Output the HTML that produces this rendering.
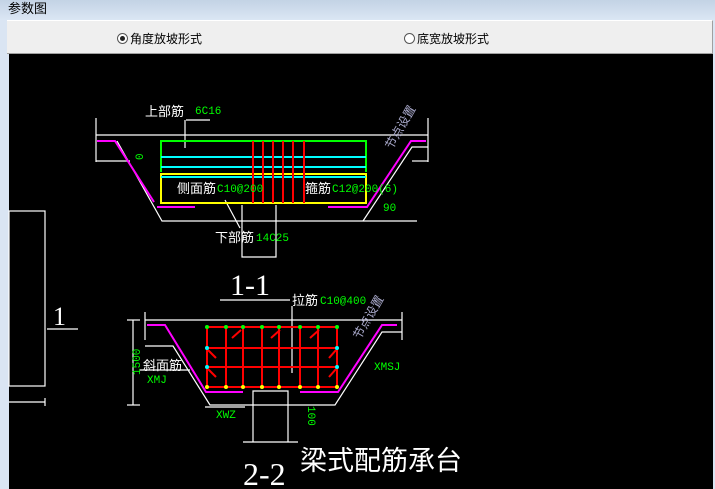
<!DOCTYPE html>
<html><head><meta charset="utf-8"><style>
*{margin:0;padding:0}
body{width:715px;height:489px;overflow:hidden;background:#dae5f3;position:relative;font-family:"Liberation Sans","Noto Sans CJK SC",sans-serif}
#title{position:absolute;left:0;top:0;width:715px;height:20px;background:linear-gradient(#c3d3e5,#dbe6f4);font-size:13px;line-height:18px;padding-left:8px;color:#000}
#panel{position:absolute;left:7px;top:20px;width:705px;height:32px;background:#efefef;border-top:1px solid #fff;border-bottom:1px solid #a0a0a0;border-right:1px solid #a0a0a0;font-size:12px}
.r{position:absolute;top:9px;display:flex;align-items:center;gap:2px}
.c{width:11px;height:11px;border:1px solid #555;border-radius:50%;background:#fff;position:relative;box-sizing:border-box}
.c.on::after{content:"";position:absolute;left:2px;top:2px;width:5px;height:5px;border-radius:50%;background:#222}
#cad{position:absolute;left:9px;top:54px;width:704px;height:435px;background:#000}
svg{position:absolute;left:0;top:0}
</style></head><body>
<div id="title">参数图</div>
<div id="panel">
<div class="r" style="left:110px"><div class="c on"></div>角度放坡形式</div>
<div class="r" style="left:397px"><div class="c"></div>底宽放坡形式</div>
</div>
<div id="cad"></div>
<svg width="715" height="489" font-family="Liberation Sans, Noto Sans CJK SC, sans-serif">
<g stroke="#fff" stroke-width="1.2" fill="none">
<rect x="9" y="211" width="36" height="175"/>
<line x1="47" y1="329" x2="78" y2="329"/>
<line x1="9" y1="402" x2="45" y2="402"/><line x1="45" y1="398" x2="45" y2="406"/>
<line x1="96" y1="135" x2="428" y2="135"/>
<line x1="96" y1="118" x2="96" y2="162"/><line x1="428" y1="118" x2="428" y2="162"/>
<line x1="96" y1="161" x2="130" y2="161"/><line x1="412" y1="161" x2="428" y2="161"/>
<polyline points="117,141 162,221 417,221"/>
<polyline points="363,221 412,147 428,147"/>
<polyline points="242,205 242,257 276,257 276,205"/>
<line x1="186" y1="120" x2="210" y2="120"/><line x1="185" y1="120" x2="185" y2="148"/>
<line x1="225" y1="200" x2="240" y2="228"/>
<line x1="220" y1="300" x2="290" y2="300"/>
<line x1="145" y1="320" x2="402" y2="320"/>
<line x1="133" y1="320" x2="133" y2="405"/><line x1="127" y1="320" x2="140" y2="320"/><line x1="127" y1="405" x2="140" y2="405"/>
<line x1="145" y1="312" x2="145" y2="340"/><line x1="402" y1="312" x2="402" y2="340"/>
<polyline points="145,346 173,346 210,405 335,405 382,332 402,332"/>
<polyline points="253,442 253,391 288,391 288,442"/>
<line x1="243" y1="442" x2="298" y2="442"/>
<line x1="292" y1="306" x2="292" y2="373"/>
<line x1="205" y1="407" x2="245" y2="407"/>
<line x1="140" y1="370" x2="190" y2="370"/>
</g>
<g fill="none" stroke="#f0f" stroke-width="2">
<polyline points="97,141 115,141 154,202"/><line x1="157" y1="207" x2="195" y2="207"/>
<polyline points="328,207 367,207 411,141 426,141"/>
<polyline points="147,325 165,325 206,392 243,392"/>
<polyline points="300,392 338,392 382,325 397,325"/>
</g>
<g stroke-width="2" fill="none">
<polyline stroke="#0f0" points="161,172 161,141 366,141 366,172"/>
<rect stroke="#ff0" x="161" y="174" width="205" height="29"/>
<g stroke="#0ff"><line x1="161" y1="157" x2="366" y2="157"/><line x1="161" y1="167" x2="366" y2="167"/><line x1="161" y1="177" x2="366" y2="177"/></g>
<g stroke="#f00"><line x1="253" y1="141" x2="253" y2="203"/><line x1="263" y1="141" x2="263" y2="203"/><line x1="273" y1="141" x2="273" y2="203"/><line x1="283" y1="141" x2="283" y2="203"/><line x1="293" y1="141" x2="293" y2="203"/><line x1="304" y1="141" x2="304" y2="203"/></g>
<g stroke="#f00"><rect x="207" y="327" width="130" height="60"/>
<line x1="226" y1="327" x2="226" y2="387"/><line x1="243" y1="327" x2="243" y2="387"/><line x1="262" y1="327" x2="262" y2="387"/><line x1="279" y1="327" x2="279" y2="387"/><line x1="300" y1="327" x2="300" y2="387"/><line x1="318" y1="327" x2="318" y2="387"/>
<line x1="207" y1="348" x2="337" y2="348"/><line x1="207" y1="367" x2="337" y2="367"/>
<line x1="232" y1="338" x2="241" y2="330"/><line x1="271" y1="338" x2="280" y2="330"/><line x1="310" y1="338" x2="319" y2="330"/>
<line x1="208" y1="350" x2="216" y2="358"/><line x1="208" y1="369" x2="216" y2="377"/><line x1="329" y1="358" x2="336" y2="350"/><line x1="329" y1="377" x2="336" y2="369"/></g>
</g>
<g fill="#0f0"><circle cx="207" cy="327" r="2"/><circle cx="226" cy="327" r="2"/><circle cx="243" cy="327" r="2"/><circle cx="262" cy="327" r="2"/><circle cx="279" cy="327" r="2"/><circle cx="300" cy="327" r="2"/><circle cx="318" cy="327" r="2"/><circle cx="337" cy="327" r="2"/></g>
<g fill="#0ff"><circle cx="207" cy="348" r="2"/><circle cx="207" cy="367" r="2"/><circle cx="337" cy="348" r="2"/><circle cx="337" cy="367" r="2"/></g>
<g fill="#ff0"><circle cx="207" cy="387" r="2"/><circle cx="226" cy="387" r="2"/><circle cx="243" cy="387" r="2"/><circle cx="262" cy="387" r="2"/><circle cx="279" cy="387" r="2"/><circle cx="300" cy="387" r="2"/><circle cx="318" cy="387" r="2"/><circle cx="337" cy="387" r="2"/></g>
<g font-size="13" fill="#fff">
<text x="145" y="116">上部筋</text>
<text x="177" y="193">侧面筋</text>
<text x="305" y="193">箍筋</text>
<text x="215" y="242">下部筋</text>
<text x="292" y="305">拉筋</text>
<text x="143" y="370">斜面筋</text>
</g>
<g font-size="11" fill="#0f0" font-family="Liberation Mono, monospace">
<text x="195" y="114">6C16</text>
<text x="217" y="192">C10@200</text>
<text x="332" y="192">C12@200(6)</text>
<text x="256" y="241">14C25</text>
<text x="383" y="211">90</text>
<text x="320" y="304">C10@400</text>
<text x="147" y="383">XMJ</text>
<text x="216" y="418">XWZ</text>
<text x="374" y="370">XMSJ</text>
<text transform="translate(143,160) rotate(-90)">0</text>
<text transform="translate(140,375) rotate(-90)">1500</text>
<text transform="translate(308,406) rotate(90)">100</text>
</g>
<g font-size="12" fill="#aac"><text transform="translate(392,150) rotate(-60)">节点设置</text><text transform="translate(360,340) rotate(-60)">节点设置</text></g>
<g fill="#fff" font-family="Liberation Serif, serif" font-size="30"><text x="230" y="295">1-1</text><text x="243" y="485" font-size="32">2-2</text><text x="53" y="325" font-size="26">1</text></g>
<text x="300" y="470" font-size="27" fill="#fff" font-family="Liberation Sans, Noto Sans CJK SC, sans-serif">梁式配筋承台</text>
</svg>
</body></html>
